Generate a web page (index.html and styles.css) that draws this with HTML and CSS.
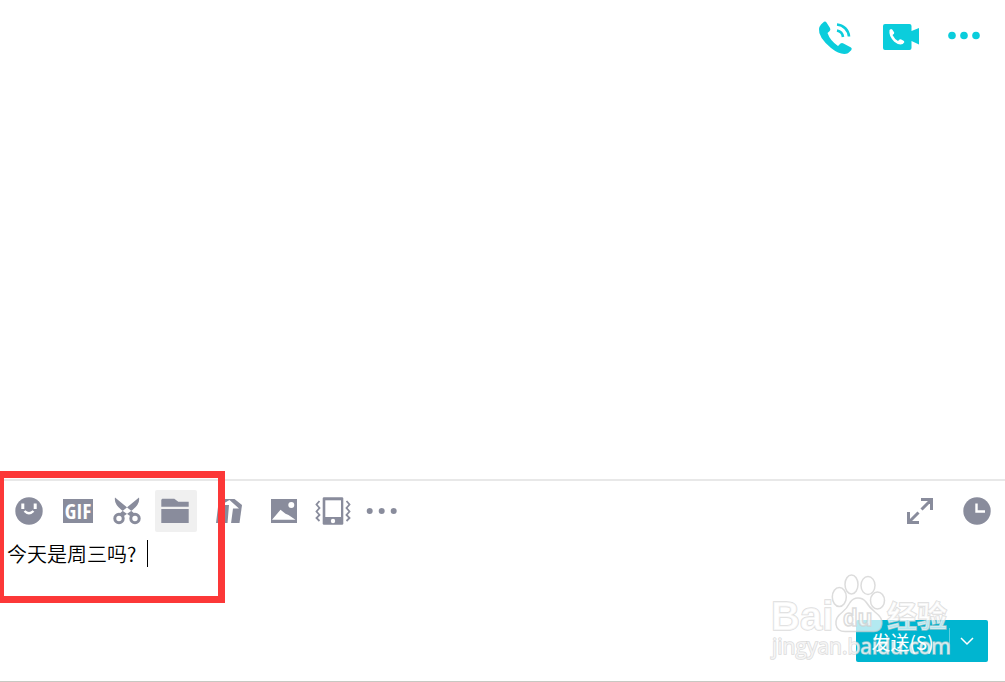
FILE: index.html
```html
<!DOCTYPE html>
<html lang="zh-CN">
<head>
    <meta charset="UTF-8">
    <meta name="viewport" content="width=device-width, initial-scale=1.0">
    <title>聊天</title>
    <link rel="stylesheet" href="styles.css">
</head>
<body>
    <header class="chat-header">
        <button class="call-button" aria-label="语音通话">
            <svg viewBox="0 0 36 36">
                <path d="M4 4.500 7 1.800Q8.500 1 9.500 2.500L13 8q1 2-.5 3.200L10.500 13Q13 20.500 21 26l2.500-2.500q1.500-1 3 0l7.500 4q1.500 1.200.2 2.800l-3.200 3Q24 36 14 28 1 17 2 9q.3-2.500 2-4.500z"/>
                <path class="wave" d="M20 10.500a7.500 7.500 0 0 1 6 6.500M20 4.500a13 13 0 0 1 12 12"/>
            </svg>
        </button>
        <button class="call-button" aria-label="视频通话">
            <svg viewBox="0 0 36 36">
                <path d="M3 4h24.500q2 0 2 2v5l7.500-3v16.500l-7.500-3.500v7q0 2-2 2H3q-2 0-2-2V6q0-2 2-2z"/>
                <path class="cut" d="m7.500 10 1.500-1 1.200.5 2 3-.2 1.200-1.500 1.300q2 4 5.500 6l1.500-1.500 1.300-.2 3.200 1.700.3 1.200-1.500 1.800q-4 1.500-8.500-2.300Q6.500 16 7.500 10z"/>
            </svg>
        </button>
        <button class="call-button" aria-label="更多">
            <svg viewBox="0 0 36 36">
                <circle cx="5" cy="15.500" r="3.800"/>
                <circle cx="17" cy="15.500" r="3.800"/>
                <circle cx="29" cy="15.500" r="3.800"/>
            </svg>
        </button>
    </header>

    <main class="messages"></main>

    <section class="composer">
        <div class="toolbar">
            <button class="tool" aria-label="表情">
                <svg viewBox="0 0 42 42">
                    <circle cx="21" cy="21" r="13.700"/>
                    <path class="cut" d="M13.300 13.500h3V19h-3zM25.700 13.500h3V19h-3z"/>
                    <path class="cut-line" d="M16.500 21q4.500 4.500 9 0"/>
                </svg>
            </button>
            <button class="tool" aria-label="动图">
                <svg viewBox="0 0 42 42">
                    <path d="M6 9h30v24H6z"/>
                    <text class="gif" x="21" y="29" text-anchor="middle">GIF</text>
                </svg>
            </button>
            <button class="tool" aria-label="截图">
                <svg viewBox="0 0 42 42">
                    <path d="M9 7.500 23 19l6 5-3.500 3-6.500-4.500Q7.500 15 9 7.500zM33 7.500 19 19l-6 5 3.500 3 6.500-4.500Q34.500 15 33 7.500z"/>
                    <circle class="line" cx="13" cy="28.500" r="4.200"/>
                    <circle class="line" cx="29" cy="28.500" r="4.200"/>
                    <circle class="cut" cx="21" cy="20" r="1"/>
                </svg>
            </button>
            <button class="tool active" aria-label="文件">
                <svg viewBox="0 0 42 42">
                    <path d="M7.300 8.700h12l4 3h10.400v5H6.300v-7zM6.300 19h27.400v14H6.300z"/>
                </svg>
            </button>
            <button class="tool spaced" aria-label="腾讯文档">
                <svg viewBox="0 0 42 42">
                    <path d="M10 9h15.500l7.500 6-2.500 18H7z"/>
                    <path class="cut" d="m20.500 10 9.500 8.500h-6L22 33.500h-3.500L20 15h-8z"/>
                </svg>
            </button>
            <button class="tool spaced" aria-label="图片">
                <svg viewBox="0 0 42 42">
                    <path d="M8 9h26v24H8z"/>
                    <circle class="cut" cx="28.300" cy="15" r="3"/>
                    <path class="cut" d="m9 29.700 8.500-10 5 4 3 1.200 7 4.800z"/>
                </svg>
            </button>
            <button class="tool" aria-label="窗口抖动">
                <svg viewBox="0 0 42 42">
                    <path d="M12 7.300h18q1.300 0 1.300 1.300v24.800q0 1.300-1.300 1.300H12q-1.300 0-1.300-1.300V8.600q0-1.300 1.300-1.300z"/>
                    <path class="cut" d="M13.300 10.300H29V27H13.300z"/>
                    <circle class="cut" cx="21" cy="31" r="2.200"/>
                    <path class="thin" d="m7.500 11-3 3.500 3 3.500-3 3.500 3 3.500-3 3 3 3M34.500 11l3 3.500-3 3.500 3 3.500-3 3.500 3 3-3 3"/>
                </svg>
            </button>
            <button class="tool" aria-label="更多工具">
                <svg viewBox="0 0 42 42">
                    <circle cx="8.700" cy="21" r="3"/>
                    <circle cx="20.700" cy="21" r="3"/>
                    <circle cx="32.700" cy="21" r="3"/>
                </svg>
            </button>
            <div class="tools-right">
                <button class="tool" aria-label="展开">
                    <svg viewBox="0 0 42 42">
                        <path class="line" d="M22 9.500h10.500V20M32 10 22.500 19.500M9.500 22v10.500H20M10 32l9.500-9.500"/>
                    </svg>
                </button>
                <button class="tool" aria-label="消息记录">
                    <svg viewBox="0 0 42 42">
                        <circle cx="21" cy="21" r="13.700"/>
                        <path class="cut-line" d="M20.500 13.500v8H29"/>
                    </svg>
                </button>
            </div>
        </div>

        <textarea class="editor" aria-label="输入消息" spellcheck="false">今天是周三吗?</textarea>
        <span class="caret"></span>

        <div class="send-row">
            <button class="send"><span class="send-label">发送(S)</span></button>
            <button class="send-menu" aria-label="发送选项">
                <svg viewBox="0 0 16 10"><path d="m2 2 6 6 6-6"/></svg>
            </button>
        </div>

        <div class="highlight"></div>

        <svg class="watermark" viewBox="0 0 190 96">
            <text class="logo" x="6" y="60">Bai</text>
            <ellipse cx="86.500" cy="14.500" rx="6.500" ry="9.500"/>
            <ellipse cx="103" cy="15.500" rx="7" ry="9"/>
            <ellipse cx="74.300" cy="27" rx="7" ry="9.500"/>
            <ellipse cx="112.500" cy="30.500" rx="7" ry="8.500"/>
            <path d="M93 28q5 0 8 4 3 5 9 10 8 6 7 12-1 8-9 7.500H80q-8 0-9-7-1-7 6-12 5-4 8-10 3-4.500 8-4.500z"/>
            <text class="logo-du" x="78" y="56">du</text>
            <text class="logo-cn" x="122" y="57">经验</text>
            <text class="url" x="7" y="84">jingyan.baidu.com</text>
        </svg>
    </section>
</body>
</html>
```

FILE: styles.css
```css
* {
    box-sizing: border-box;
}
body {
    display: flex;
    flex-direction: column;
    min-height: 100vh;
    margin: 0;
    overflow: hidden;
    background-color: #fff;
    font-family: "Noto Sans CJK SC", "Noto Sans", sans-serif;
}
button {
    padding: 0;
    border: none;
    background: none;
    font-family: inherit;
    cursor: pointer;
}
svg {
    display: block;
}
.chat-header {
    display: flex;
    justify-content: flex-end;
    gap: 29px;
    padding: 20px 22px 0 0;
}
.call-button {
    width: 36px;
    height: 36px;
}
.call-button svg {
    fill: #0bcddc;
    overflow: visible;
}
.call-button .wave {
    fill: none;
    stroke: #0bcddc;
    stroke-width: 2.6;
}
.messages {
    flex: 1;
}
.composer {
    position: relative;
    display: flex;
    flex-direction: column;
    height: 203px;
    border-top: 2px solid #e8e8e8;
    border-bottom: 1px solid #c8c8c2;
}
.toolbar {
    display: flex;
    gap: 7px;
    padding: 9px 7px 0 8px;
}
.tool {
    width: 42px;
    height: 42px;
    border-radius: 2px;
}
.tool svg {
    fill: #898c9c;
}
.tool.active {
    background-color: #f0f0f0;
}
.tool.spaced {
    margin-left: 5px;
}
.tool .line {
    fill: none;
    stroke: #898c9c;
    stroke-width: 3;
}
.tool .thin {
    fill: none;
    stroke: #898c9c;
    stroke-width: 1.8;
}
.tool .cut-line {
    fill: none;
    stroke: #fff;
    stroke-width: 2.4;
}
svg .cut {
    fill: #fff;
}
.tool .gif {
    fill: #fff;
    font: bold 21px "Liberation Sans Narrow", "Open Sans Condensed", "Liberation Sans", sans-serif;
}
.tools-right {
    display: flex;
    gap: 15px;
    margin-left: auto;
}
.editor {
    flex: 1;
    width: 100%;
    padding: 6px 7px;
    border: none;
    outline: none;
    resize: none;
    background: none;
    color: #000;
    font: 350 20px/32px "Noto Sans CJK SC", sans-serif;
}
.caret {
    position: absolute;
    top: 59px;
    left: 147px;
    width: 1px;
    height: 27px;
    background-color: #000;
}
.send-row {
    display: flex;
    justify-content: flex-end;
    padding: 0 17px 19px 0;
}
.send,
.send-menu {
    height: 42px;
    background-color: #00b5d0;
    color: #fff;
}
.send {
    width: 93px;
    border-radius: 2px 0 0 2px;
    font-size: 19px;
    font-weight: 400;
}
/* keep the label above the watermark */
.send-label {
    position: relative;
    z-index: 1;
}
.send-menu {
    display: flex;
    align-items: center;
    justify-content: center;
    width: 39px;
    padding-right: 4px;
    border-radius: 0 2px 2px 0;
    background-image: linear-gradient(#5fd0e0, #5fd0e0);
    background-position: 0 8px;
    background-size: 1px 26px;
    background-repeat: no-repeat;
}
.send-menu svg {
    width: 16px;
    fill: none;
    stroke: #fff;
    stroke-width: 1.5;
}
.highlight {
    position: absolute;
    top: -10px;
    left: 0;
    width: 225px;
    height: 132px;
    border: 7px solid #fc3838;
    border-left-width: 4px;
    pointer-events: none;
}
.watermark {
    position: absolute;
    right: 50px;
    bottom: 15px;
    width: 190px;
    height: 96px;
    fill: rgba(255, 255, 255, 0.7);
    stroke: rgba(205, 205, 205, 0.7);
    stroke-width: 1.5;
    pointer-events: none;
}
.watermark text {
    paint-order: stroke;
}
.logo {
    font: bold 40px "Liberation Sans", sans-serif;
}
.watermark .logo-du {
    font: bold 24px "Liberation Sans", sans-serif;
    paint-order: normal;
}
.logo-cn {
    font: bold 30px "Noto Sans CJK SC", sans-serif;
}
.url {
    font: 21px "Open Sans", "Noto Sans", sans-serif;
}
```
